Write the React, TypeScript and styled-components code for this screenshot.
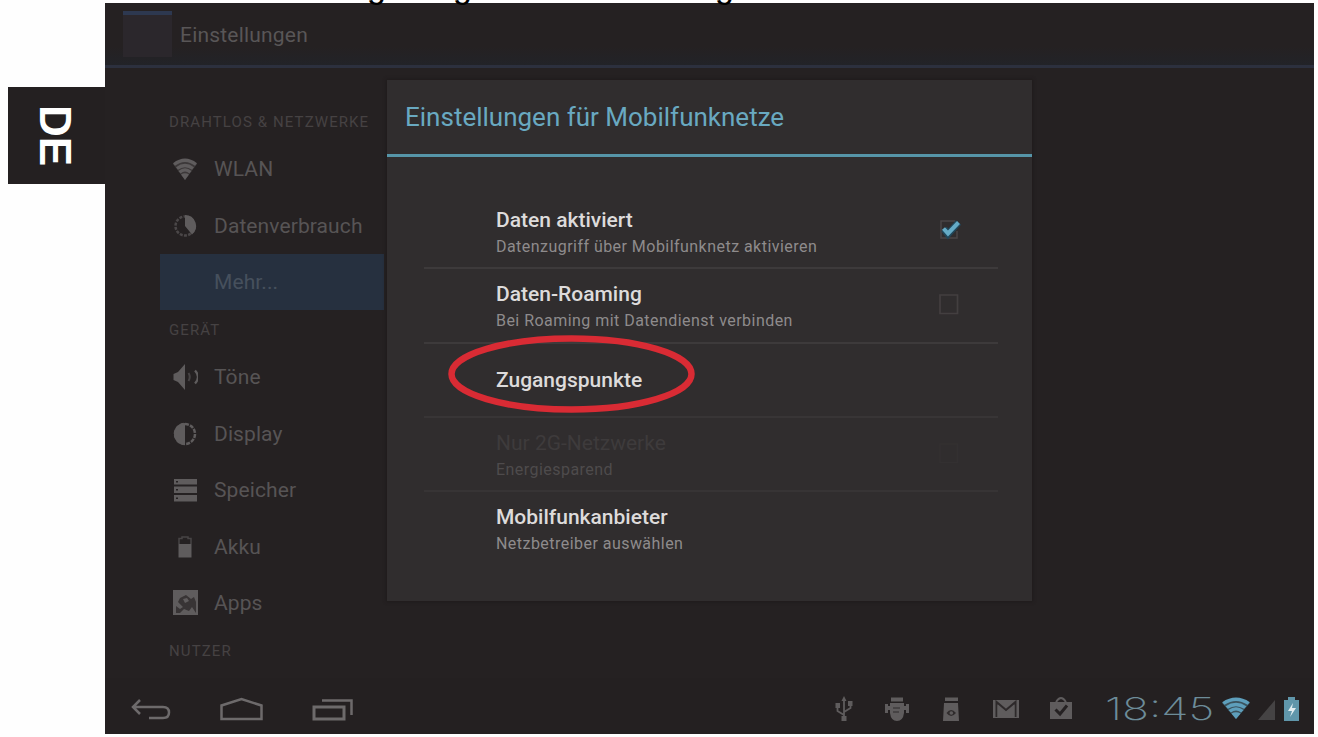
import React from "react";
import styled, { createGlobalStyle } from "styled-components";

const Global = createGlobalStyle`
  * { box-sizing: border-box; }
  html, body { margin: 0; background: #fefefe; }
  body { width: 1318px; height: 737px; overflow: hidden; font-family: Roboto, "Liberation Sans", sans-serif; }
  svg { display: block; }
`;

const Page = styled.div`
  position: relative;
  display: grid;
  grid-template-columns: 105px 1209px;
  width: 1318px;
  height: 737px;
  padding-top: 3px;
  overflow: hidden;
`;

const Caption = styled.div`
  position: absolute;
  left: 367px;
  top: -30px;
  height: 32px;
  display: flex;
  font: 34px/32px "Liberation Sans", sans-serif;
  color: #000;
`;
const Cut = styled.span<{ $w: number }>`
  width: ${(p) => p.$w}px;
`;

const Tab = styled.div`
  margin: 84px 0 0 8px;
  height: 97px;
  padding: 18px 33px 0 0;
  display: flex;
  justify-content: flex-end;
  background: #242021;
`;
const TabText = styled.span`
  writing-mode: vertical-rl;
  font: bold 44px/34px "Liberation Sans", sans-serif;
  color: #fff;
`;

const Screen = styled.div`
  height: 731px;
  display: flex;
  flex-direction: column;
  background: #252122;
`;
const Header = styled.header`
  height: 65px;
  flex: none;
  display: flex;
  padding: 8px 0 0 18px;
  gap: 8px;
  border-bottom: 3px solid #2c303e;
  background: linear-gradient(#252122 70%, #222328);
`;
const AppIcon = styled.div`
  width: 49px;
  height: 46px;
  border-top: 4px solid #2d3850;
  background: #2b272c;
`;
const HeaderTitle = styled.h1`
  margin: 0;
  font-weight: 400;
  font-size: 21px;
  line-height: 49px;
  letter-spacing: 0.2px;
  color: #595657;
`;

const Body = styled.div`
  flex: 1;
  display: flex;
  min-height: 0;
`;
const Sidebar = styled.nav`
  width: 224px;
  margin: 34px 3px 0 55px;
  flex: none;
`;
const Section = styled.h2`
  margin: 0;
  height: 39px;
  padding-left: 9px;
  font-weight: 400;
  font-size: 15px;
  line-height: 40px;
  letter-spacing: 1.1px;
  color: #464243;
  white-space: nowrap;
`;
const Item = styled.div<{ $active?: boolean }>`
  height: 56.4px;
  padding-left: 12px;
  display: flex;
  align-items: center;
  gap: 16px;
  font-size: 21px;
  letter-spacing: 0.1px;
  color: ${(p) => (p.$active ? "#46505d" : "#575455")};
  background: ${(p) => (p.$active ? "#26303f" : "transparent")};
`;
const Glyph = styled.span`
  width: 26px;
  height: 26px;
  color: #5f5c5d;
`;

const Dialog = styled.section`
  width: 645px;
  height: 521px;
  margin-top: 12px;
  background: #302d2e;
  box-shadow: 0 0 3px 1px #1f1b1c;
`;
const DialogTitle = styled.h2`
  margin: 0;
  height: 77px;
  padding-left: 18px;
  border-bottom: 3px solid #5695a8;
  font-weight: 400;
  font-size: 26px;
  line-height: 75px;
  color: #69a9c1;
`;
const List = styled.div`
  margin: 38px 34px 0 37px;
`;
const Row = styled.div<{ $rule: string }>`
  position: relative;
  height: 74.3px;
  padding: 0 36px 0 72px;
  display: flex;
  align-items: center;
  justify-content: space-between;
  border-bottom: 2px solid ${(p) => p.$rule};
`;
const Words = styled.div<{ $pair: boolean }>`
  padding-top: ${(p) => (p.$pair ? 4 : 1)}px;
`;
const Name = styled.div<{ $dim?: boolean }>`
  font-size: 21px;
  line-height: 27px;
  font-weight: ${(p) => (p.$dim ? 400 : 500)};
  color: ${(p) => (p.$dim ? "#3e3b3c" : "#dddbdb")};
`;
const Note = styled.div<{ $dim?: boolean }>`
  font-size: 16px;
  line-height: 25px;
  letter-spacing: 0.46px;
  color: ${(p) => (p.$dim ? "#4e4b4c" : "#8e8b8c")};
  white-space: nowrap;
`;
const Box = styled.span`
  width: 24px;
  height: 24px;
  margin-bottom: 3px;
`;
const Ring = styled.svg`
  position: absolute;
  left: 23px;
  top: -10px;
`;

const NavBar = styled.footer`
  height: 56px;
  flex: none;
  display: flex;
  align-items: center;
  justify-content: space-between;
  padding: 0 14px 0 24px;
  background: #242021;
  color: #6d6a6b;
`;
const Keys = styled.div`
  display: flex;
  gap: 47px;
  padding-top: 7px;
`;
const Status = styled.div`
  display: flex;
  align-items: center;
  color: #5f5c5d;
`;
const Tray = styled.div`
  display: flex;
  gap: 28px;
  padding-top: 5px;
  margin-right: 31px;
`;
const Clock = styled.span`
  width: 116px;
  height: 34px;
  margin-top: 5px;
  font: 250 31px/34px Inter, sans-serif;
  transform: scaleX(1.44);
  transform-origin: 0 50%;
  color: #6d8c99;
`;
const Signals = styled.div`
  display: flex;
  align-items: flex-end;
  gap: 7px;
  padding-top: 3px;
`;
const Online = styled.span`
  color: #5e9fbc;
`;

const Wifi = ({ width = 26, height = 26 }: { width?: number; height?: number }) => (
  <svg width={width} height={height} viewBox="0 0 26 26" preserveAspectRatio="none" fill="none" stroke="currentColor">
    <path d="M1 8Q13 -1 25 8L13 24Z" fill="currentColor" stroke="none" opacity=".4" />
    <path d="M13 24 9 18.500Q13 16 17 18.500Z" fill="currentColor" stroke="none" />
    <path d="M2 8.500Q13 0 24 8.500M5 12.500Q13 6.500 21 12.500M7.500 16.200Q13 11.500 18.500 16.200" strokeWidth="3.200" />
  </svg>
);
const Usage = () => (
  <svg viewBox="0 0 26 26" fill="none" stroke="currentColor">
    <circle cx="13" cy="13" r="9.500" strokeWidth="2.500" strokeDasharray="3 1.300" opacity=".65" />
    <path d="M13 2A11 11 0 0 1 20 21.500L13 13Z" fill="currentColor" stroke="none" />
  </svg>
);
const Sound = () => (
  <svg viewBox="0 0 26 26" fill="none" stroke="currentColor">
    <path d="M1.500 10 6 8 13 0V26L6 18 1.500 16Z" fill="currentColor" stroke="none" />
    <path d="M16.500 9Q19 13 16.500 17" strokeWidth="2" opacity=".6" />
    <path d="M23 6.500Q29 13 23 19.500" strokeWidth="2.200" />
  </svg>
);
const Contrast = () => (
  <svg viewBox="0 0 26 26" fill="none" stroke="currentColor">
    <circle cx="13" cy="13" r="10" strokeWidth="2.500" strokeDasharray="4 1.200" />
    <path d="M13 2A11 11 0 0 0 13 24Z" fill="currentColor" stroke="none" />
  </svg>
);
const Storage = () => (
  <svg viewBox="0 0 26 26" fill="currentColor">
    <path d="M2 2H25V7.500H2ZM2 9.500H25V16H2ZM2 18H25V24.500H2Z" />
    <path d="M4 4H6V5.500H4ZM4 12H6V13.500H4ZM4 20.500H6V22H4Z" fill="#252122" />
  </svg>
);
const Battery = () => (
  <svg viewBox="0 0 26 26" fill="none" stroke="currentColor">
    <path d="M7 10V4.500H10V3H16V4.500H19V10" strokeWidth="1.500" opacity=".6" />
    <path d="M6.500 10H19.500V23.500H6.500Z" fill="currentColor" stroke="none" />
  </svg>
);
const Apps = () => (
  <svg viewBox="0 0 26 26">
    <path d="M1 0H26V25H1Z" fill="currentColor" />
    <path d="M4 23V16L8 19 11 17 6 12 8 8 14 5 19 9 22 7 24 12V23L20 17 17 21 12 19 8 23Z" fill="#383435" />
    <path d="M11 9 15 8 17 11 13 13Z" fill="currentColor" />
  </svg>
);

const Check = () => (
  <svg width="24" height="24" fill="none">
    <path d="M17 3H3V20H19V13" stroke="#4a4647" strokeWidth="1.500" />
    <path d="M6 11 10 16 20.500 4.500" stroke="#21475a" strokeWidth="7" />
    <path d="M5.500 10.500 10 15.500 20.500 4.500" stroke="#65abc6" strokeWidth="4" />
  </svg>
);
const Empty = ({ faint }: { faint?: boolean }) => (
  <svg width="24" height="24" fill="none" stroke={faint ? "#333031" : "#433f40"} strokeWidth="1.700">
    <path d="M2 3H19.500V21.500H2Z" />
  </svg>
);

const Back = () => (
  <svg width="44" height="26" fill="none" stroke="currentColor" strokeWidth="2.500">
    <path d="M11 3 4 10 11 17M5 10H34Q40 10 40 15.500T34 21H20" />
  </svg>
);
const Home = () => (
  <svg width="44" height="26" fill="none" stroke="currentColor" strokeWidth="2.500">
    <path d="M1.500 22V8.500L21.500 2 41.500 8.500V22Z" />
  </svg>
);
const Recent = () => (
  <svg width="44" height="26" fill="none" stroke="currentColor" strokeWidth="2.500">
    <path d="M3 10H33V22H3Z" strokeWidth="3" />
    <path d="M11 3.500H40.500V18" />
  </svg>
);

const Usb = () => (
  <svg width="24" height="26" viewBox="0 0 24 26" fill="none" stroke="currentColor" strokeWidth="1.800">
    <path d="M12 3V23M12 19 5.500 15V10M12 16 18.500 12V8" />
    <path d="M9.500 5 12 0 14.500 5ZM3.500 7H8V12H3.500ZM16 5H20.500V10H16ZM9.500 20H14.500V25H9.500Z" fill="currentColor" stroke="none" />
  </svg>
);
const Debug = () => (
  <svg width="26" height="26" viewBox="0 0 26 26" fill="currentColor">
    <path d="M7 1.500H19V5.500H7ZM6 7H20V17Q19 25 13 25T6 17ZM1 8H4V17H1ZM22 8H25V17H22ZM4 10H7V14H4ZM20 10H23V14H20Z" />
    <path d="M9 12H16M9 16H15" stroke="#3f3b3c" strokeWidth="1.500" />
  </svg>
);
const Card = () => (
  <svg width="26" height="26" viewBox="0 0 26 26">
    <path d="M7 1.500H20V5H7ZM6 7H20L21 25H5Z" fill="currentColor" />
    <path d="M8.500 17Q13 11 18 17 13 23 8.500 17Z" fill="#302c2d" />
    <circle cx="13.300" cy="17" r="1.800" fill="currentColor" />
  </svg>
);
const Mail = () => (
  <svg width="28" height="26" viewBox="0 0 28 26">
    <path d="M1 4H27V22H1Z" fill="currentColor" />
    <path d="M4.500 21V6L14 14 23.500 6V21" fill="none" stroke="#2d292a" strokeWidth="2" />
    <path d="M5.500 9 14 16 22.500 9V22H5.500Z" fill="currentColor" />
  </svg>
);
const Bag = () => (
  <svg width="26" height="26" viewBox="0 0 26 26" fill="none">
    <path d="M8 6Q13 -2 18 6" stroke="currentColor" strokeWidth="1.800" />
    <path d="M2 6H24V23H2Z" fill="currentColor" />
    <path d="M7.500 13.500 12 18 19 9.500" stroke="#252122" strokeWidth="3" />
  </svg>
);
const Cell = () => (
  <svg width="18" height="23"><path d="M0 22 17 2V22Z" fill="#454344" /></svg>
);
const Charge = () => (
  <svg width="17" height="24">
    <path d="M1 3H5V0H12V3H16V24H1Z" fill="#6096aa" />
    <path d="M10 6 5 14H9L7 20 13 11H9Z" fill="#e2edf0" />
  </svg>
);

type Entry = { label: string; icon?: React.ReactNode; active?: boolean };
const network: Entry[] = [
  { label: "WLAN", icon: <Wifi /> },
  { label: "Datenverbrauch", icon: <Usage /> },
  { label: "Mehr...", active: true },
];
const device: Entry[] = [
  { label: "Töne", icon: <Sound /> },
  { label: "Display", icon: <Contrast /> },
  { label: "Speicher", icon: <Storage /> },
  { label: "Akku", icon: <Battery /> },
  { label: "Apps", icon: <Apps /> },
];

const Entries = ({ items }: { items: Entry[] }) => (
  <>
    {items.map((e) => (
      <Item key={e.label} $active={e.active}>
        <Glyph>{e.icon}</Glyph>
        {e.label}
      </Item>
    ))}
  </>
);

const Setting = ({ name, note, dim, box, rule = "#3d3a3b", children }: {
  name: string; note?: string; dim?: boolean; box?: React.ReactNode; rule?: string; children?: React.ReactNode;
}) => (
  <Row $rule={rule}>
    <Words $pair={!!note}>
      <Name $dim={dim}>{name}</Name>
      {note && <Note $dim={dim}>{note}</Note>}
    </Words>
    {box && <Box>{box}</Box>}
    {children}
  </Row>
);

export default function App() {
  return (
    <Page>
      <Global />
      <Caption>
        <Cut $w={86}>g</Cut>
        <Cut $w={262}>g</Cut>
        <Cut $w={20}>g</Cut>
      </Caption>
      <Tab><TabText>DE</TabText></Tab>
      <Screen>
        <Header>
          <AppIcon />
          <HeaderTitle>Einstellungen</HeaderTitle>
        </Header>
        <Body>
          <Sidebar>
            <Section>DRAHTLOS &amp; NETZWERKE</Section>
            <Entries items={network} />
            <Section>GERÄT</Section>
            <Entries items={device} />
            <Section>NUTZER</Section>
          </Sidebar>
          <Dialog>
            <DialogTitle>Einstellungen für Mobilfunknetze</DialogTitle>
            <List>
              <Setting name="Daten aktiviert" note="Datenzugriff über Mobilfunknetz aktivieren" box={<Check />} />
              <Setting name="Daten-Roaming" note="Bei Roaming mit Datendienst verbinden" box={<Empty />} />
              <Setting name="Zugangspunkte" rule="#383536">
                <Ring width="250" height="80">
                  <ellipse cx="124.500" cy="40" rx="120" ry="35.500" fill="none" stroke="#d92b34" strokeWidth="6.500" />
                </Ring>
              </Setting>
              <Setting name="Nur 2G-Netzwerke" note="Energiesparend" dim box={<Empty faint />} rule="#373435" />
              <Setting name="Mobilfunkanbieter" note="Netzbetreiber auswählen" rule="transparent" />
            </List>
          </Dialog>
        </Body>
        <NavBar>
          <Keys><Back /><Home /><Recent /></Keys>
          <Status>
            <Tray><Usb /><Debug /><Card /><Mail /><Bag /></Tray>
            <Clock>18:45</Clock>
            <Signals>
              <Online><Wifi width={30} height={26} /></Online>
              <Cell />
              <Charge />
            </Signals>
          </Status>
        </NavBar>
      </Screen>
    </Page>
  );
}
